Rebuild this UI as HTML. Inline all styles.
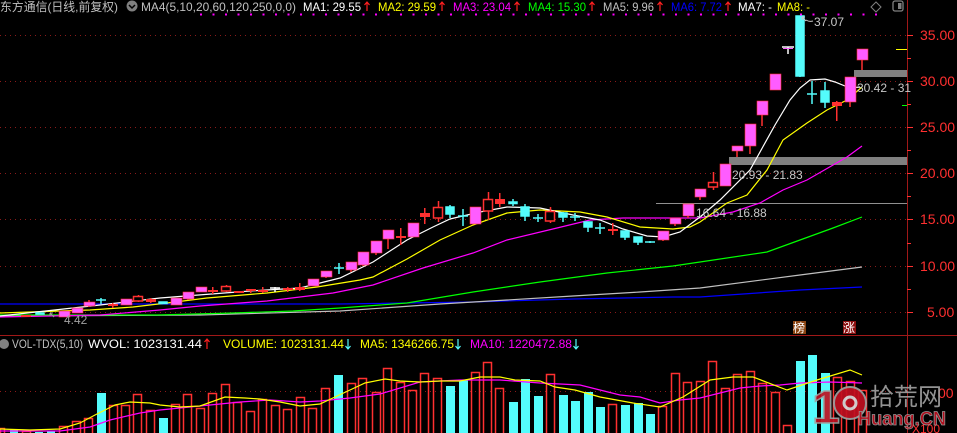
<!DOCTYPE html>
<html><head><meta charset="utf-8"><style>
html,body{margin:0;padding:0;background:#000;}
svg{display:block;}
text{font-family:"Liberation Sans","Noto Sans CJK SC",sans-serif;}
</style></head><body>
<svg width="957" height="433" viewBox="0 0 957 433" xmlns="http://www.w3.org/2000/svg">
<rect width="957" height="433" fill="#000"/>
<!-- grid -->
<g stroke="#8a1a1a" stroke-dasharray="1,4" stroke-width="1">
<line x1="0" y1="35.5" x2="907" y2="35.5"/><line x1="0" y1="81.5" x2="907" y2="81.5"/>
<line x1="0" y1="127.5" x2="907" y2="127.5"/><line x1="0" y1="173.5" x2="907" y2="173.5"/>
<line x1="0" y1="219.5" x2="907" y2="219.5"/><line x1="0" y1="266.5" x2="907" y2="266.5"/>
<line x1="0" y1="312.5" x2="907" y2="312.5"/><line x1="0" y1="391.5" x2="907" y2="391.5"/>
</g>
<line x1="907.5" y1="0" x2="907.5" y2="433" stroke="#a01818"/>
<line x1="0" y1="335.5" x2="957" y2="335.5" stroke="#a01818"/>
<!-- price axis -->
<g fill="#ff3030" font-size="14">
<text x="920" y="40">35.00</text><text x="920" y="86">30.00</text><text x="920" y="132">25.00</text>
<text x="920" y="178">20.00</text><text x="920" y="224">15.00</text><text x="920" y="271">10.00</text>
<text x="927" y="317">5.00</text>
</g>
<g stroke="#ff3030"><line x1="907" y1="35.5" x2="913" y2="35.5"/><line x1="907" y1="81.5" x2="913" y2="81.5"/><line x1="907" y1="127.5" x2="913" y2="127.5"/><line x1="907" y1="173.5" x2="913" y2="173.5"/><line x1="907" y1="219.5" x2="913" y2="219.5"/><line x1="907" y1="266.5" x2="913" y2="266.5"/><line x1="907" y1="312.5" x2="913" y2="312.5"/>
<line x1="907" y1="58.5" x2="911" y2="58.5"/><line x1="907" y1="104.5" x2="911" y2="104.5"/><line x1="907" y1="150.5" x2="911" y2="150.5"/><line x1="907" y1="196.5" x2="911" y2="196.5"/><line x1="907" y1="243.5" x2="911" y2="243.5"/><line x1="907" y1="289.5" x2="911" y2="289.5"/></g>
<line x1="896" y1="49.5" x2="907" y2="49.5" stroke="#ffff00"/>
<line x1="902" y1="105.5" x2="907" y2="105.5" stroke="#00ff00"/>
<!-- gray bars and line -->
<rect x="854" y="70" width="53" height="7" fill="#808080"/>
<rect x="729" y="157" width="178" height="8" fill="#808080"/>
<line x1="656" y1="203.5" x2="907" y2="203.5" stroke="#909090"/>
<!-- MA lines -->
<g fill="none" stroke-width="1.2">
<polyline stroke="#0000ff" points="0,304 340,304 473,302 573,299 673,297 700,297 800,290 862,287"/>
<polyline stroke="#c0c0c0" points="0,316 200,315 340,311 440,304 507,300 573,296 640,292 700,288 800,275 862,267"/>
<polyline stroke="#00ff00" points="0,315 157,315 233,313 293,311 340,308 407,303 473,292 540,282 607,273 673,266 700,262 767,252 800,240 833,228 862,217"/>
<polyline stroke="#ff00ff" points="0,317 100,315 160,310 200,306 267,301 333,293 373,285 423,268 473,253 507,240 557,228 590,220 623,218 700,218 733,212 760,203 783,190 807,180 847,157 862,146"/>
<polyline stroke="#ffff00" points="0,313 90,310 133,307 167,303 207,298 267,293 317,287 360,280 373,277 407,259 440,240 473,225 507,213 540,210 580,212 607,217 640,227 673,229 690,227 700,222 727,203 747,195 767,170 783,140 807,123 827,110 847,100 862,87"/>
<polyline stroke="#ffffff" points="0,316 100,305 160,298 250,291 300,288 340,278 373,262 407,240 433,227 450,219 480,212 507,207 540,208 573,215 600,220 623,229 647,236 663,237 680,232 700,217 720,200 750,170 775,125 790,100 800,88 810,80 825,79 835,82 850,88 860,87"/>
</g>
<!-- candles -->
<g id="c">
<!-- red solid -->
<g fill="#ff3030" stroke="none">
<rect x="21" y="315" width="10" height="2"/>
<rect x="108" y="304" width="10" height="2"/><rect x="112" y="303" width="1.5" height="5"/>
<rect x="146" y="299" width="10" height="3"/><rect x="150" y="298" width="1.5" height="5"/>
<rect x="208" y="290" width="10" height="2"/><rect x="212" y="287" width="1.5" height="7"/>
<rect x="234" y="291" width="10" height="2"/>
<rect x="246" y="289" width="10" height="2"/><rect x="250" y="289" width="1.5" height="4"/>
<rect x="258" y="290" width="10" height="2"/><rect x="262" y="287" width="1.5" height="6"/>
<rect x="283" y="288" width="10" height="2"/><rect x="287" y="287" width="1.5" height="5"/>
<rect x="295" y="287" width="10" height="3"/><rect x="299" y="283" width="1.5" height="8"/>
<rect x="396" y="236" width="10" height="2"/><rect x="400" y="228" width="1.5" height="17"/>
<rect x="420" y="213" width="10" height="4"/><rect x="424" y="208" width="1.5" height="16"/>
<rect x="495" y="199" width="10" height="5"/><rect x="499" y="193" width="1.5" height="14"/>
<rect x="608" y="229" width="10" height="2"/><rect x="612" y="223" width="1.5" height="12"/>
<rect x="832" y="102" width="10" height="4"/><rect x="836" y="101" width="1.5" height="20"/>
</g>
<!-- red hollow -->
<g fill="#000" stroke="#ff3030" stroke-width="1.5">
<line x1="138.5" y1="295" x2="138.5" y2="302"/><rect x="133.5" y="296.5" width="9" height="4.5"/>
<line x1="226.5" y1="285" x2="226.5" y2="292"/><rect x="221.5" y="286.5" width="9" height="4.5"/>
<line x1="438.5" y1="201" x2="438.5" y2="222"/><rect x="433.5" y="207.5" width="9" height="10.5"/>
<line x1="488.5" y1="192" x2="488.5" y2="220"/><rect x="483.5" y="199.5" width="9" height="11.5"/>
<line x1="550.5" y1="207" x2="550.5" y2="223"/><rect x="545.5" y="211.5" width="9" height="9.5"/>
<line x1="713.5" y1="172" x2="713.5" y2="190"/><rect x="708.5" y="182.5" width="9" height="4.5"/>
</g>
<!-- pink wicks -->
<g stroke="#ff3030" stroke-width="1.5">
<line x1="89" y1="300" x2="89" y2="307"/><line x1="188" y1="292" x2="188" y2="300"/>
<line x1="326" y1="271" x2="326" y2="278"/><line x1="351" y1="262" x2="351" y2="272"/>
<line x1="363" y1="252" x2="363" y2="266"/><line x1="376" y1="241" x2="376" y2="255"/>
<line x1="388" y1="230" x2="388" y2="249"/><line x1="663" y1="231" x2="663" y2="241"/>
<line x1="675" y1="218" x2="675" y2="226"/><line x1="688" y1="204" x2="688" y2="218"/>
<line x1="700" y1="189" x2="700" y2="200"/><line x1="737" y1="146" x2="737" y2="157"/>
<line x1="750" y1="124" x2="750" y2="154"/><line x1="762" y1="101" x2="762" y2="126"/>
<line x1="850" y1="77" x2="850" y2="107"/><line x1="862" y1="49" x2="862" y2="70"/>
</g>
<!-- pink bodies -->
<g fill="#ff5cff" stroke="#ff3030" stroke-width="0.6">
<rect x="59" y="311" width="11" height="6"/><rect x="72" y="308" width="11" height="5"/>
<rect x="84" y="302" width="11" height="4"/><rect x="121" y="299" width="11" height="6"/>
<rect x="171" y="298" width="11" height="7"/><rect x="183" y="292" width="11" height="7"/>
<rect x="196" y="287" width="11" height="5"/><rect x="308" y="279" width="11" height="7"/>
<rect x="321" y="271" width="11" height="6"/><rect x="346" y="262" width="11" height="8"/>
<rect x="358" y="252" width="11" height="13"/><rect x="371" y="241" width="11" height="12"/>
<rect x="383" y="230" width="11" height="9"/><rect x="408" y="223" width="11" height="14"/>
<rect x="470" y="207" width="11" height="17"/><rect x="658" y="231" width="11" height="9"/>
<rect x="670" y="218" width="11" height="6"/><rect x="683" y="204" width="11" height="12"/>
<rect x="695" y="189" width="11" height="8"/><rect x="720" y="164" width="11" height="22"/>
<rect x="732" y="146" width="11" height="5"/><rect x="745" y="124" width="11" height="22"/>
<rect x="757" y="101" width="11" height="14"/><rect x="770" y="74" width="11" height="16"/>
<rect x="845" y="77" width="11" height="25"/><rect x="857" y="49" width="11" height="11"/>
</g>
<!-- cyan -->
<g fill="#54fcfc" stroke="#54fcfc" stroke-width="1.5">
<rect x="36" y="313" width="8" height="1"/>
<line x1="101" y1="298" x2="101" y2="304"/><line x1="96" y1="300" x2="106" y2="300"/>
<rect x="159" y="302" width="8" height="1.5"/>
<line x1="339" y1="263" x2="339" y2="274"/><line x1="334" y1="268" x2="344" y2="268"/>
<line x1="450" y1="205" x2="450" y2="218"/><rect x="446" y="207" width="8" height="7"/>
<line x1="463" y1="209" x2="463" y2="226"/><line x1="458" y1="216" x2="468" y2="216"/>
<line x1="513" y1="199" x2="513" y2="206"/><rect x="509" y="202" width="8" height="1.5"/>
<line x1="525" y1="204" x2="525" y2="221"/><rect x="521" y="207" width="8" height="9"/>
<line x1="538" y1="214" x2="538" y2="222"/><line x1="533" y1="218" x2="543" y2="218"/>
<line x1="563" y1="212" x2="563" y2="222"/><rect x="559" y="213" width="8" height="4"/>
<line x1="575" y1="213" x2="575" y2="221"/><line x1="570" y1="217" x2="580" y2="217"/>
<line x1="588" y1="222" x2="588" y2="232"/><rect x="584" y="222" width="8" height="5"/>
<line x1="600" y1="223" x2="600" y2="234"/><line x1="595" y1="228" x2="605" y2="228"/>
<line x1="625" y1="231" x2="625" y2="240"/><rect x="621" y="231" width="8" height="6"/>
<line x1="638" y1="237" x2="638" y2="245"/><rect x="634" y="237" width="8" height="5"/>
<line x1="650" y1="241" x2="650" y2="243"/><line x1="645" y1="242" x2="655" y2="242"/>
<line x1="800" y1="16" x2="800" y2="77"/><rect x="796" y="16" width="8" height="60"/>
<line x1="812" y1="81" x2="812" y2="104"/><line x1="807" y1="94" x2="817" y2="94"/>
<line x1="825" y1="82" x2="825" y2="108"/><rect x="821" y="91" width="8" height="11"/>
</g>
<g stroke="#fff" stroke-width="1.5">
<line x1="275" y1="287" x2="275" y2="292"/><line x1="270" y1="288" x2="280" y2="288"/>
<line x1="788" y1="47" x2="788" y2="54"/><line x1="782" y1="47" x2="794" y2="47"/>
</g>
<line x1="783" y1="48.5" x2="793" y2="48.5" stroke="#ff5cff"/>
</g>
<!-- annotations -->
<g fill="#c8c8c8" font-size="12">
<text x="814" y="26">37.07</text>
<text x="857" y="92">30.42 - 31</text>
<text x="732" y="179">20.93 - 21.83</text>
<text x="696" y="217">16.64 - 16.88</text>
<text x="64" y="324" fill="#a0a0a0">4.42</text>
</g>
<path d="M802 17 L806 21 M802 17 L802 20 M802 17 L805 17 M806 20 Q809 22 813 21" stroke="#c8c8c8" fill="none"/>
<path d="M50 313 L54 317 M50 313 L50 316 M50 313 L53 313" stroke="#a0a0a0" fill="none"/>
<rect x="793" y="321" width="13" height="13" fill="#8b4513"/>
<text x="793" y="332" font-size="12" fill="#fff">榜</text>
<rect x="843" y="321" width="13" height="13" fill="#8b1010"/>
<text x="843" y="332" font-size="12" fill="#fff">涨</text>
<!-- header -->
<line x1="200" y1="14.5" x2="880" y2="14.5" stroke="#ff00ff" stroke-width="2" stroke-dasharray="2,10.5"/>
<g font-size="12">
<text x="0" y="11" fill="#c0c0c0" textLength="118" lengthAdjust="spacingAndGlyphs">东方通信(日线,前复权)</text>
<circle cx="132" cy="6" r="5.5" fill="#808080"/>
<path d="M129 5 L132 8 L135 5" stroke="#000" stroke-width="1.5" fill="none"/>
<text x="141" y="11" fill="#c0c0c0" textLength="155" lengthAdjust="spacingAndGlyphs">MA4(5,10,20,60,120,250,0,0)</text>
<text x="303" y="11" fill="#fff" textLength="58" lengthAdjust="spacingAndGlyphs">MA1: 29.55</text>
<text x="378" y="11" fill="#ffff00" textLength="58" lengthAdjust="spacingAndGlyphs">MA2: 29.59</text>
<text x="453" y="11" fill="#ff00ff" textLength="58" lengthAdjust="spacingAndGlyphs">MA3: 23.04</text>
<text x="528" y="11" fill="#00ff00" textLength="58" lengthAdjust="spacingAndGlyphs">MA4: 15.30</text>
<text x="603" y="11" fill="#c0c0c0" textLength="51" lengthAdjust="spacingAndGlyphs">MA5: 9.96</text>
<text x="671" y="11" fill="#0000ff" textLength="51" lengthAdjust="spacingAndGlyphs">MA6: 7.72</text>
<text x="738" y="11" fill="#fff" textLength="34" lengthAdjust="spacingAndGlyphs">MA7: -</text>
<text x="777" y="11" fill="#ffff00" textLength="33" lengthAdjust="spacingAndGlyphs">MA8: -</text>
</g>
<g stroke="#ff2020" stroke-width="1.2" fill="none">
<path d="M367 11 V2 M364.5 5 L367 2 L369.5 5"/><path d="M442 11 V2 M439.5 5 L442 2 L444.5 5"/>
<path d="M517 11 V2 M514.5 5 L517 2 L519.5 5"/><path d="M592 11 V2 M589.5 5 L592 2 L594.5 5"/>
<path d="M660 11 V2 M657.5 5 L660 2 L662.5 5"/><path d="M728 11 V2 M725.5 5 L728 2 L730.5 5"/>
</g>
<path d="M876 2 L881 7 L876 12 L871 7 Z" stroke="#808080" fill="none"/>
<rect x="893" y="1" width="10" height="10" rx="2" stroke="#808080" fill="none" stroke-width="1.3"/>
<rect x="898" y="3" width="3.5" height="6" fill="#808080"/>
<!-- volume bars -->
<g fill="#54fcfc">
<rect x="10" y="430" width="8" height="3"/><rect x="35" y="432" width="8" height="1"/><rect x="47" y="431" width="8" height="2"/>
<rect x="97" y="393" width="9" height="40"/><rect x="159" y="418" width="9" height="15"/>
<rect x="334" y="375" width="9" height="58"/><rect x="446" y="386" width="9" height="47"/><rect x="459" y="380" width="9" height="53"/>
<rect x="509" y="402" width="9" height="31"/><rect x="521" y="379" width="9" height="54"/><rect x="534" y="396" width="9" height="37"/>
<rect x="559" y="395" width="9" height="38"/><rect x="571" y="401" width="9" height="32"/><rect x="584" y="392" width="9" height="41"/>
<rect x="596" y="407" width="9" height="26"/><rect x="621" y="405" width="9" height="28"/><rect x="634" y="403" width="9" height="30"/>
<rect x="646" y="414" width="9" height="19"/><rect x="796" y="361" width="9" height="72"/><rect x="808" y="355" width="9" height="78"/>
<rect x="821" y="373" width="9" height="60"/>
</g>
<g fill="none" stroke="#ff3030" stroke-width="1.5">
<rect x="0.5" y="428.5" width="4" height="6"/><rect x="22.5" y="431.5" width="8" height="4"/>
<rect x="59.5" y="426.5" width="8" height="8"/><rect x="72.5" y="421.5" width="8" height="13"/><rect x="84.5" y="418.5" width="8" height="16"/>
<rect x="109.5" y="405.5" width="8" height="29"/><rect x="121.5" y="405.5" width="8" height="29"/><rect x="133.5" y="394.5" width="8" height="40"/>
<rect x="146.5" y="410.5" width="8" height="24"/><rect x="171.5" y="404.5" width="8" height="30"/><rect x="183.5" y="394.5" width="8" height="40"/>
<rect x="196.5" y="408.5" width="8" height="26"/><rect x="208.5" y="393.5" width="8" height="41"/><rect x="221.5" y="384.5" width="8" height="50"/>
<rect x="233.5" y="402.5" width="8" height="32"/><rect x="246.5" y="411.5" width="8" height="23"/><rect x="258.5" y="399.5" width="8" height="35"/>
<rect x="271.5" y="405.5" width="8" height="29"/><rect x="283.5" y="409.5" width="8" height="25"/><rect x="296.5" y="397.5" width="8" height="37"/>
<rect x="308.5" y="408.5" width="8" height="26"/><rect x="321.5" y="388.5" width="8" height="46"/><rect x="347.5" y="383.5" width="8" height="51"/>
<rect x="358.5" y="378.5" width="8" height="56"/><rect x="372.5" y="392.5" width="8" height="42"/><rect x="383.5" y="368.5" width="8" height="66"/>
<rect x="396.5" y="382.5" width="8" height="52"/><rect x="408.5" y="390.5" width="8" height="44"/><rect x="420.5" y="373.5" width="8" height="61"/>
<rect x="433.5" y="378.5" width="8" height="56"/><rect x="471.5" y="372.5" width="8" height="62"/><rect x="483.5" y="362.5" width="8" height="72"/>
<rect x="495.5" y="388.5" width="8" height="46"/><rect x="546.5" y="374.5" width="8" height="60"/><rect x="608.5" y="404.5" width="8" height="30"/>
<rect x="658.5" y="406.5" width="8" height="28"/><rect x="671.5" y="373.5" width="8" height="61"/><rect x="683.5" y="382.5" width="8" height="52"/>
<rect x="696.5" y="381.5" width="8" height="53"/><rect x="708.5" y="361.5" width="8" height="73"/><rect x="721.5" y="388.5" width="8" height="46"/>
<rect x="733.5" y="374.5" width="8" height="60"/><rect x="746.5" y="371.5" width="8" height="63"/><rect x="758.5" y="383.5" width="8" height="51"/>
<rect x="771.5" y="392.5" width="8" height="42"/><rect x="783.5" y="425.5" width="8" height="9"/><rect x="833.5" y="377.5" width="8" height="57"/>
<rect x="846.5" y="381.5" width="8" height="53"/><rect x="858.5" y="390.5" width="8" height="44"/>
</g>
<g fill="none" stroke-width="1.2">
<polyline stroke="#ff00ff" points="0,431 60,431 90,427 110,420 140,413 160,410 200,406 240,402 270,400 300,402 320,401 350,398 380,394 420,382 460,380 500,380 540,383 580,385 620,395 640,397 660,403 680,400 700,398 720,393 740,388 760,386 780,385 800,383 830,382 862,383"/>
<polyline stroke="#ffff00" points="0,429 30,430 60,429 80,423 95,415 105,410 115,405 130,402 150,403 160,405 180,407 200,406 225,397 245,398 260,399 280,402 300,406 320,404 335,397 350,390 365,383 385,379 400,381 420,382 440,381 460,381 480,377 500,377 515,380 540,381 555,387 575,390 600,397 633,403 660,407 683,397 710,380 733,377 753,377 787,390 817,380 850,370 862,375"/>
</g>
<!-- volume header -->
<circle cx="4" cy="344" r="5" fill="#808080"/>
<g font-size="12">
<text x="12" y="348" fill="#c0c0c0" textLength="71" lengthAdjust="spacingAndGlyphs">VOL-TDX(5,10)</text>
<text x="88" y="348" fill="#fff" textLength="114" lengthAdjust="spacingAndGlyphs">WVOL: 1023131.44</text>
<text x="223" y="348" fill="#ffff00" textLength="121" lengthAdjust="spacingAndGlyphs">VOLUME: 1023131.44</text>
<text x="360" y="348" fill="#ffff00" textLength="94" lengthAdjust="spacingAndGlyphs">MA5: 1346266.75</text>
<text x="470" y="348" fill="#ff00ff" textLength="102" lengthAdjust="spacingAndGlyphs">MA10: 1220472.88</text>
</g>
<path d="M207 349 V339 M204.5 342 L207 339 L209.5 342" stroke="#ff2020" fill="none" stroke-width="1.2"/>
<g stroke="#54fcfc" fill="none" stroke-width="1.2">
<path d="M348 339 V349 M345.5 346 L348 349 L350.5 346"/><path d="M458 339 V349 M455.5 346 L458 349 L460.5 346"/><path d="M576 339 V349 M573.5 346 L576 349 L578.5 346"/>
</g>
<!-- watermark -->
<text x="938" y="398" fill="#ff3030" font-size="14">00</text>
<text x="912" y="433" fill="#ff3030" font-size="12">X100</text>
<g opacity="0.92">
<text x="812" y="423" font-size="46" font-weight="bold" fill="#c01020" stroke="#a0a0a0" stroke-width="1.5" textLength="28" lengthAdjust="spacingAndGlyphs">1</text>
<circle cx="850" cy="403" r="16" fill="#c01020" stroke="#a0a0a0" stroke-width="2"/>
<circle cx="850" cy="403" r="6" fill="none" stroke="#ddd" stroke-width="3"/>
<text x="870" y="405" font-size="24" fill="#a0a0a0">拾荒网</text>
<text x="858" y="425" font-size="19" font-weight="bold" fill="#c01020" stroke="#a0a0a0" stroke-width="0.8" textLength="88" lengthAdjust="spacingAndGlyphs">Huang.CN</text>
</g>
</svg>
</body></html>
